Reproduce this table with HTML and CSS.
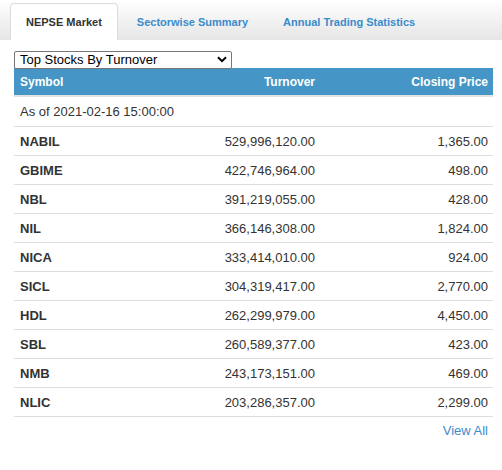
FILE: index.html
```html
<!DOCTYPE html>
<html>
<head>
<meta charset="utf-8">
<link rel="stylesheet" href="styles.css">
</head>
<body>
<div class="tabs">
  <a class="tab active">NEPSE Market</a>
  <a class="tab">Sectorwise Summary</a>
  <a class="tab">Annual Trading Statistics</a>
</div>
<div class="content">
  <div class="select-wrap">
    <select class="picker">
      <option>Top Stocks By Turnover</option>
    </select>
    <svg class="chev" width="10" height="7" viewBox="0 0 10 7"><path d="M1 1.2 L5 5.2 L9 1.2" fill="none" stroke="#000" stroke-width="2"/></svg>
  </div>
  <table class="stocks">
    <thead>
      <tr><th class="c1">Symbol</th><th class="c2">Turnover</th><th class="c3">Closing Price</th></tr>
    </thead>
    <tbody>
      <tr class="asof"><td colspan="3">As of 2021-02-16 15:00:00</td></tr>
      <tr><td class="sym">NABIL</td><td class="num">529,996,120.00</td><td class="num">1,365.00</td></tr>
      <tr><td class="sym">GBIME</td><td class="num">422,746,964.00</td><td class="num">498.00</td></tr>
      <tr><td class="sym">NBL</td><td class="num">391,219,055.00</td><td class="num">428.00</td></tr>
      <tr><td class="sym">NIL</td><td class="num">366,146,308.00</td><td class="num">1,824.00</td></tr>
      <tr><td class="sym">NICA</td><td class="num">333,414,010.00</td><td class="num">924.00</td></tr>
      <tr><td class="sym">SICL</td><td class="num">304,319,417.00</td><td class="num">2,770.00</td></tr>
      <tr><td class="sym">HDL</td><td class="num">262,299,979.00</td><td class="num">4,450.00</td></tr>
      <tr><td class="sym">SBL</td><td class="num">260,589,377.00</td><td class="num">423.00</td></tr>
      <tr><td class="sym">NMB</td><td class="num">243,173,151.00</td><td class="num">469.00</td></tr>
      <tr class="last"><td class="sym">NLIC</td><td class="num">203,286,357.00</td><td class="num">2,299.00</td></tr>
    </tbody>
  </table>
  <div class="more"><a class="viewall">View All</a></div>
</div>
</body>
</html>
```

FILE: styles.css
```css
html, body {
  margin: 0;
  padding: 0;
  background: #fff;
  font-family: "Liberation Sans", Arial, sans-serif;
  color: #333;
}
.tabs {
  margin-top: 3px;
  height: 37px;
  display: flex;
  align-items: stretch;
  padding-left: 10px;
  background: linear-gradient(to bottom, #fdfdfd 0%, #f1f1f1 50%, #e6e6e6 100%);
}
.tab {
  display: flex;
  align-items: center;
  padding: 0 15px;
  margin-right: 3px;
  font-size: 11px;
  font-weight: bold;
  color: #3a8bcb;
  border: 1px solid transparent;
  border-bottom: none;
  border-radius: 4px 4px 0 0;
}
.tab.active {
  background: #fff;
  color: #333;
  border-color: #dcdcdc;
}
.content {
  padding: 10px 9px 0 14px;
}
.select-wrap {
  position: relative;
  width: 218px;
  height: 18px;
}
.picker {
  appearance: none;
  -webkit-appearance: none;
  box-sizing: border-box;
  width: 218px;
  height: 18px;
  margin: 0;
  padding: 0 0 0 5px;
  border: 1px solid #767676;
  border-radius: 2px;
  background: #fff;
  font-family: "Liberation Sans", Arial, sans-serif;
  font-size: 13px;
  color: #000;
  line-height: 16px;
}
.chev {
  position: absolute;
  right: 5px;
  top: 6px;
  pointer-events: none;
}
.stocks {
  width: 479px;
  border-collapse: collapse;
  font-size: 13px;
}
.stocks th {
  background: #4596c6;
  color: #fff;
  font-size: 12px;
  font-weight: bold;
  height: 28px;
  padding: 0 5px;
  box-sizing: border-box;
}
.c1 { text-align: left; width: 150px; padding-left: 6px !important; }
.c2 { text-align: right; width: 156px; }
.c3 { text-align: right; width: 173px; }
.stocks td {
  height: 28px;
  padding: 0 5px;
  border-top: 1px solid #dddddd;
}
.stocks .asof td {
  border-top: 2px solid #e2e2e2;
  height: 29px;
  padding-left: 6px;
}
.stocks tr.last td {
  border-bottom: 1px solid #dddddd;
}
.sym {
  font-weight: bold;
  padding-left: 6px !important;
}
.num {
  text-align: right;
}
.more {
  display: flex;
  justify-content: flex-end;
  padding: 6px 5px 0 0;
}
.viewall {
  font-size: 13px;
  color: #428bca;
}
```
